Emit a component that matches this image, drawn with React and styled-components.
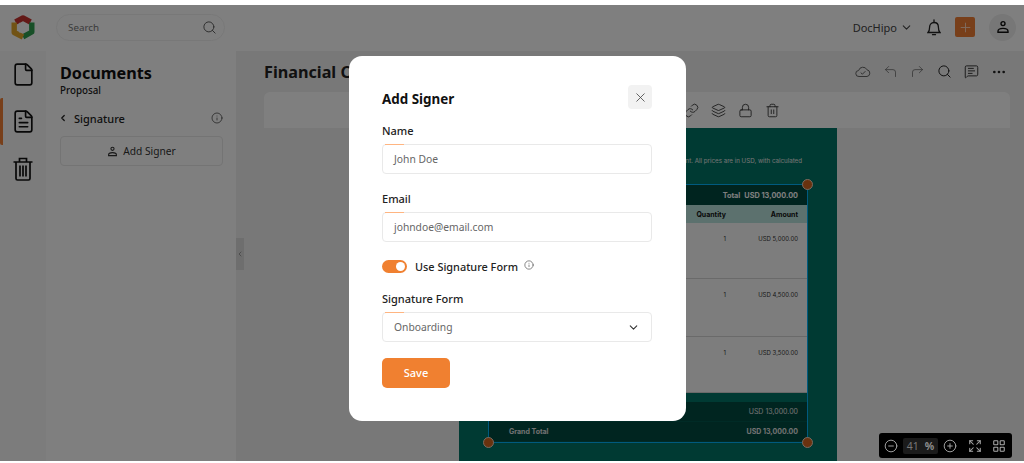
import React from 'react';
import styled, { createGlobalStyle } from 'styled-components';
import {
  ChevronDown, ChevronLeft, CircleMinus, CirclePlus, CornerUpLeft, CornerUpRight, Ellipsis, Expand, File, FileText,
  Info, LayoutGrid, Layers, Link, Lock, MessageSquareText, Plus, Search, Trash2, X,
} from 'lucide-react';

const GlobalStyle = createGlobalStyle`
  html, body { margin: 0; padding: 0; background: #fff; }
  body { font-family: "Noto Sans", "Open Sans", sans-serif; color: #222; overflow: hidden; }
  * { box-sizing: border-box; }
`;

const Page = styled.div`
  position: relative;
  width: 1024px;
  height: 463px;
  padding: 5px 0 2px;
  display: flex;
  flex-direction: column;
  overflow: hidden;
`;

const Header = styled.header`
  flex: 0 0 46px;
  display: flex;
  align-items: center;
  padding: 0 8px 2px 11px;
  background: #fff;
`;

const SearchBox = styled.div`
  width: 169px;
  height: 27px;
  margin-left: 21px;
  padding: 0 7px 0 11px;
  display: flex;
  align-items: center;
  justify-content: space-between;
  border: 1px solid #f1f1f1;
  border-radius: 14px;
  font-size: 9.8px;
  color: #777;
  svg { color: #555; }
`;

const HeaderRight = styled.div`
  margin-left: auto;
  display: flex;
  align-items: center;
  font-size: 11px;
  color: #444;
`;

const Brand = styled.span`
  display: flex;
  align-items: center;
  gap: 3px;
  margin-right: 14px;
`;

const AddButton = styled.button`
  width: 20px;
  height: 20px;
  margin: 0 14px 0 14px;
  padding: 0;
  display: flex;
  align-items: center;
  justify-content: center;
  border: 0;
  border-radius: 2px;
  background: #f07f35;
  color: #ffd9bf;
`;

const Avatar = styled.div`
  width: 27px;
  height: 27px;
  display: flex;
  align-items: center;
  justify-content: center;
  border-radius: 50%;
  background: #eee;
  color: #111;
`;

const Body = styled.div`
  flex: 1;
  min-height: 0;
  display: flex;
`;

const Rail = styled.nav`
  flex: 0 0 46px;
  display: flex;
  flex-direction: column;
  background: #f8f8f8;
`;

const RailItem = styled.div`
  height: 47px;
  display: flex;
  align-items: center;
  justify-content: center;
  color: #111;
  border-left: 3px solid ${(p) => (p.$active ? '#f07f35' : 'transparent')};
  padding-right: 3px;
  border-radius: 2px;
`;

const Panel = styled.aside`
  flex: 0 0 190px;
  padding: 11px 13px 0 14px;
  background: #fff;
`;

const PanelTitle = styled.h2`
  margin: 0;
  font-size: 16.2px;
  line-height: 22px;
  font-weight: 700;
  color: #111;
`;

const PanelSub = styled.div`
  font-size: 9.8px;
  line-height: 14px;
  font-weight: 500;
  color: #222;
`;

const SectionRow = styled.div`
  margin-top: 11px;
  height: 18px;
  display: flex;
  align-items: center;
  font-size: 11px;
  font-weight: 500;
  color: #222;
  svg:first-child { margin-right: 6px; margin-left: -2px; }
  svg:last-child { margin-left: auto; color: #333; }
`;

const OutlineButton = styled.button`
  width: 100%;
  height: 30px;
  margin-top: 9px;
  display: flex;
  align-items: center;
  justify-content: center;
  gap: 5px;
  border: 1px solid #e8e8e8;
  border-radius: 4px;
  background: #fff;
  font: 400 10.2px "Noto Sans", sans-serif;
  color: #333;
`;

const Canvas = styled.main`
  position: relative;
  flex: 1;
  min-width: 0;
  padding: 0 14px 0 28px;
  display: flex;
  flex-direction: column;
  background: #f0f0f0;
`;

const Collapse = styled.div`
  position: absolute;
  left: 0;
  top: 187px;
  width: 8px;
  height: 32px;
  display: flex;
  align-items: center;
  justify-content: center;
  background: #ddd;
  color: #777;
`;

const TitleRow = styled.div`
  flex: 0 0 41px;
  display: flex;
  align-items: center;
  justify-content: space-between;
`;

const DocTitle = styled.h1`
  margin: 0;
  font-size: 16.2px;
  font-weight: 700;
  color: #222;
  white-space: nowrap;
`;

const TitleIcons = styled.div`
  display: flex;
  align-items: center;
  gap: 12px;
  padding-right: 3px;
  color: #222;
`;

const MutedIcon = styled.span`
  display: flex;
  color: #666;
`;

const Toolbar = styled.div`
  flex: 0 0 36px;
  padding-left: 420px;
  display: flex;
  align-items: center;
  gap: 12px;
  border-radius: 6px 6px 0 0;
  background: #fff;
  color: #333;
`;

const Doc = styled.section`
  flex: 1;
  width: 378px;
  margin-left: 195px;
  padding: 29px 29px 0;
  background: #007566;
  font-family: Inter, sans-serif;
  overflow: hidden;
`;

const DocNote = styled.p`
  margin: 0 0 19px;
  padding-right: 6px;
  text-align: right;
  font-size: 6.2px;
  line-height: 8px;
  color: #e7e7e7;
  white-space: nowrap;
`;

const Selection = styled.div`
  position: relative;
  width: 320px;
  border: 1px solid #00b4ff;
`;

const Handle = styled.span`
  position: absolute;
  width: 11px;
  height: 11px;
  border-radius: 50%;
  background: #d2651f;
  border: 1.5px solid #f5d5bf;
  top: ${(p) => (p.$bottom ? 'auto' : '-6px')};
  bottom: ${(p) => (p.$bottom ? '-6px' : 'auto')};
  left: ${(p) => (p.$left ? '-6px' : 'auto')};
  right: ${(p) => (p.$left ? 'auto' : '-6px')};
`;

const TotalBar = styled.div`
  height: 20px;
  padding-right: 9px;
  display: flex;
  align-items: center;
  justify-content: flex-end;
  gap: 4px;
  background: #00483f;
  font-size: 7.3px;
  font-weight: 700;
  color: #fff;
`;

const Row = styled.div`
  display: grid;
  grid-template-columns: 1fr 30px 72px;
  padding-right: 9px;
  text-align: right;
`;

const ColumnHead = styled(Row)`
  height: 18px;
  align-items: center;
  background: #b9e2dc;
  font-size: 7px;
  font-weight: 700;
  color: #111;
`;

const ItemRow = styled(Row)`
  height: ${(p) => p.$height}px;
  padding-top: 12px;
  border-bottom: 1px solid #d5d5d5;
  background: #fbfbfb;
  font-size: 6px;
  color: #333;
`;

const Spacer = styled.div`
  height: 9px;
`;

const SummaryRow = styled.div`
  height: 20px;
  padding: 0 9px 0 20px;
  display: flex;
  align-items: center;
  justify-content: space-between;
  background: #004a40;
  border-bottom: 1px solid #00574c;
  font-size: 7px;
  font-weight: ${(p) => (p.$strong ? 700 : 400)};
  color: #e4e4e4;
`;

const Backdrop = styled.div`
  position: absolute;
  inset: 5px 0 2px;
  padding: 51px 0 0 349px;
  background: rgba(0, 0, 0, 0.5);
`;

const Modal = styled.div`
  width: 337px;
  height: 365px;
  padding: 29px 34px 0 33px;
  border-radius: 13px;
  background: #fff;
`;

const ModalHead = styled.div`
  height: 24px;
  margin-bottom: 13px;
  display: flex;
  align-items: center;
  justify-content: space-between;
`;

const ModalTitle = styled.h3`
  margin: 3px 0 0;
  font-size: 13.4px;
  font-weight: 700;
  color: #111;
`;

const CloseButton = styled.button`
  width: 24px;
  height: 24px;
  padding: 0;
  display: flex;
  align-items: center;
  justify-content: center;
  border: 0;
  border-radius: 4px;
  background: #f2f2f2;
  color: #444;
`;

const Field = styled.div`
  margin-bottom: 16px;
`;

const Label = styled.label`
  display: block;
  margin-bottom: 4px;
  font-size: 11px;
  line-height: 18px;
  font-weight: 500;
  color: #222;
`;

const Input = styled.div`
  position: relative;
  height: 30px;
  padding: 0 11px;
  display: flex;
  align-items: center;
  justify-content: space-between;
  border: 1px solid #e9e9e9;
  border-radius: 4px;
  font-size: 10.3px;
  color: #666;
  &::before {
    content: '';
    position: absolute;
    left: 2px;
    top: -1px;
    width: 19px;
    height: 1px;
    background: #ffb581;
  }
  svg { color: #333; }
`;

const ToggleRow = styled.div`
  height: 16px;
  margin-bottom: 16px;
  display: flex;
  align-items: center;
  font-size: 10.9px;
  font-weight: 500;
  color: #222;
  svg { margin: -3px 0 0 6px; color: #444; }
`;

const Toggle = styled.span`
  width: 25px;
  height: 13px;
  margin-right: 8px;
  padding: 2px;
  display: flex;
  justify-content: flex-end;
  border-radius: 7px;
  background: #f08030;
  &::after {
    content: '';
    width: 9px;
    height: 9px;
    border-radius: 50%;
    background: #fff;
  }
`;

const SaveButton = styled.button`
  width: 68px;
  height: 30px;
  padding: 0 0 2px;
  border: 0;
  border-radius: 5px;
  background: #f08030;
  font: 500 11px "Noto Sans", sans-serif;
  color: #fff;
`;

const ZoomBar = styled.div`
  position: absolute;
  left: 879px;
  top: 433px;
  width: 133px;
  height: 25px;
  padding: 0 6px 0 5px;
  display: flex;
  align-items: center;
  justify-content: space-between;
  border-radius: 3px;
  background: #000;
  color: #aaa;
`;

const ZoomGroup = styled.div`
  display: flex;
  align-items: center;
  gap: ${(p) => p.$gap}px;
`;

const ZoomValue = styled.div`
  width: 35px;
  height: 16px;
  display: flex;
  align-items: center;
  justify-content: center;
  gap: 6px;
  border-radius: 2px;
  background: #1b1b1b;
  font-size: 10.5px;
  color: #777;
  b { font-weight: 700; color: #8c8c8c; }
`;

const Logo = () => (
  <svg width="24" height="25" viewBox="0 0 24 25" fill="none">
    <path d="M4.500 7 12 3l7.500 4" stroke="#c7332f" strokeWidth="5.400" strokeLinejoin="round" />
    <path d="M20.800 7.500v9.500L12 21.800" stroke="#2f9e4f" strokeWidth="5.400" strokeLinejoin="round" />
    <path d="M12 22 3.200 17.500V7.500" stroke="#e3a72a" strokeWidth="5.400" strokeLinejoin="round" />
    <path d="M8.500 7.500l9.500 5.500-9.500 5z" fill="#fff" />
  </svg>
);

const UserIcon = ({ size = 14 }) => (
  <svg width={size} height={size} viewBox="0 0 14 14" fill="none" stroke="currentColor" strokeWidth="1.400">
    <circle cx="7" cy="3.600" r="2" />
    <path d="M2 12.300v-1C2 9.600 3.500 8.400 7 8.400s5 1.200 5 2.900v1z" />
  </svg>
);

const RailTrash = () => (
  <svg width="22" height="24" viewBox="0 0 22 24" fill="none" stroke="currentColor" strokeWidth="1.700">
    <path d="M1.500 5h19M7.500 5V1.500h7V5M4 5v16.500a1.500 1.500 0 0 0 1.500 1.500h11a1.500 1.500 0 0 0 1.500-1.500V5" />
    <path d="M8 8.500v11M11 8.500v11M14 8.500v11" />
  </svg>
);

const BellIcon = () => (
  <svg width="14" height="17" viewBox="0 0 14 17" fill="none" stroke="#222" strokeWidth="1.300">
    <path d="M1 13.500h12c-1.200-1.300-1.600-2.400-1.600-5.200 0-2.700-1.700-4.800-4.400-4.800S2.600 5.600 2.600 8.300c0 2.800-.4 3.900-1.600 5.200z" />
    <path d="M7 .8v2.700M5.500 15.700h3" strokeLinecap="round" />
  </svg>
);

const CloudCheckIcon = () => (
  <svg width="16" height="14" viewBox="0 0 16 14" fill="none" stroke="currentColor" strokeWidth="1">
    <path d="M4 11.500a3 3 0 0 1-.4-6A4.500 4.500 0 0 1 12 4.800a3.400 3.400 0 0 1 0 6.700z" />
    <path d="M5.700 7.600l1.700 1.600 3-3" />
  </svg>
);

const App = () => {
  return (
    <Page>
      <GlobalStyle />
      <Header>
        <Logo />
        <SearchBox>
          Search
          <Search size={15} strokeWidth={1.5} />
        </SearchBox>
        <HeaderRight>
          <Brand>
            DocHipo <ChevronDown size={13} strokeWidth={2} />
          </Brand>
          <BellIcon />
          <AddButton><Plus size={15} strokeWidth={1.5} /></AddButton>
          <Avatar><UserIcon /></Avatar>
        </HeaderRight>
      </Header>

      <Body>
        <Rail>
          <RailItem><File size={25} strokeWidth={1.6} /></RailItem>
          <RailItem $active><FileText size={25} strokeWidth={1.6} /></RailItem>
          <RailItem><RailTrash /></RailItem>
        </Rail>

        <Panel>
          <PanelTitle>Documents</PanelTitle>
          <PanelSub>Proposal</PanelSub>
          <SectionRow>
            <ChevronLeft size={10} strokeWidth={3} />
            Signature
            <Info size={12} strokeWidth={1.4} />
          </SectionRow>
          <OutlineButton><UserIcon size={11} /> Add Signer</OutlineButton>
        </Panel>

        <Canvas>
          <Collapse><ChevronLeft size={8} strokeWidth={2} /></Collapse>
          <TitleRow>
            <DocTitle>Financial Consulting</DocTitle>
            <TitleIcons>
              <MutedIcon><CloudCheckIcon /></MutedIcon>
              <MutedIcon><CornerUpLeft size={15} strokeWidth={1.2} /></MutedIcon>
              <MutedIcon><CornerUpRight size={15} strokeWidth={1.2} /></MutedIcon>
              <Search size={15} strokeWidth={1.6} />
              <MessageSquareText size={15} strokeWidth={1.4} />
              <Ellipsis size={16} strokeWidth={2} />
            </TitleIcons>
          </TitleRow>

          <Toolbar>
            <Link size={15} strokeWidth={1.4} />
            <Layers size={15} strokeWidth={1.4} />
            <Lock size={15} strokeWidth={1.4} />
            <Trash2 size={15} strokeWidth={1.4} />
          </Toolbar>

          <Doc>
            <DocNote>Investment. All prices are in USD, with calculated</DocNote>
            <Selection>
              <Handle />
              <Handle $bottom $left />
              <Handle $bottom />
              <TotalBar><span>Total</span><span>USD 13,000.00</span></TotalBar>
              <ColumnHead><span /><span>Quantity</span><span>Amount</span></ColumnHead>
              <ItemRow $height={56}><span /><span>1</span><span>USD 5,000.00</span></ItemRow>
              <ItemRow $height={58}><span /><span>1</span><span>USD 4,500.00</span></ItemRow>
              <ItemRow $height={56}><span /><span>1</span><span>USD 3,500.00</span></ItemRow>
              <Spacer />
              <SummaryRow><span>Subtotal</span><span>USD 13,000.00</span></SummaryRow>
              <SummaryRow $strong><span>Grand Total</span><span>USD 13,000.00</span></SummaryRow>
            </Selection>
          </Doc>
        </Canvas>
      </Body>

      <Backdrop>
        <Modal>
          <ModalHead>
            <ModalTitle>Add Signer</ModalTitle>
            <CloseButton><X size={15} strokeWidth={1.3} /></CloseButton>
          </ModalHead>
          <Field>
            <Label>Name</Label>
            <Input>John Doe</Input>
          </Field>
          <Field>
            <Label>Email</Label>
            <Input>johndoe@email.com</Input>
          </Field>
          <ToggleRow>
            <Toggle />
            Use Signature Form
            <Info size={10} strokeWidth={1.5} />
          </ToggleRow>
          <Field>
            <Label>Signature Form</Label>
            <Input>Onboarding <ChevronDown size={13} strokeWidth={2} /></Input>
          </Field>
          <SaveButton>Save</SaveButton>
        </Modal>
      </Backdrop>

      <ZoomBar>
        <ZoomGroup $gap={5}>
          <CircleMinus size={14} strokeWidth={1.6} />
          <ZoomValue>41 <b>%</b></ZoomValue>
          <CirclePlus size={14} strokeWidth={1.6} />
        </ZoomGroup>
        <ZoomGroup $gap={10}>
          <Expand size={14} strokeWidth={1.8} />
          <LayoutGrid size={14} strokeWidth={1.8} />
        </ZoomGroup>
      </ZoomBar>
    </Page>
  );
};

export default App;
